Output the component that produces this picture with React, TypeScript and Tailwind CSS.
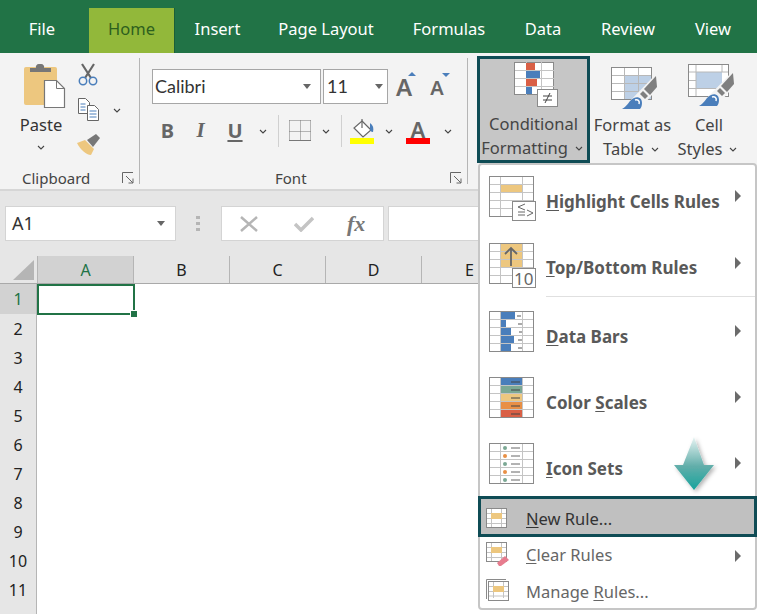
import type { ReactNode } from 'react'

const TABS = [
  { name: 'File', width: 'w-[84px]' },
  { name: 'Home', width: 'w-[91px] pl-[5px] pr-[0px]', active: true },
  { name: 'Insert', width: 'w-[85px]' },
  { name: 'Page Layout', width: 'w-[132px]' },
  { name: 'Formulas', width: 'w-[114px]' },
  { name: 'Data', width: 'w-[74px]' },
  { name: 'Review', width: 'w-[96px]' },
  { name: 'View', width: 'w-[74px]' },
]

const COLUMNS = ['B', 'C', 'D', 'E', 'F']
const ROWS = [2, 3, 4, 5, 6, 7, 8, 9, 10, 11]

function Chevron({ className = '' }: { className?: string }) {
  return (
    <svg viewBox="0 0 8 5" className={`h-[5px] w-[8px] shrink-0 ${className}`} fill="none" stroke="#444" strokeWidth="1.1">
      <path d="M1 1l3 3 3-3" />
    </svg>
  )
}

function Caret() {
  return (
    <svg viewBox="0 0 8 5" className="h-[5px] w-[8px] shrink-0" fill="#666">
      <path d="M0 0h8L4 5z" />
    </svg>
  )
}

function Launcher() {
  return (
    <svg viewBox="0 0 12 12" className="h-[12px] w-[12px]" fill="none" stroke="#666" strokeWidth="1">
      <path d="M.5 11V.5H11M4 4l7 7M11 6.500V11H6.500" />
    </svg>
  )
}

function Grid({ cols = [11, 33], rows = 5, w = 44, h = 40, line = '#c4c4c4', children, extra }: {
  cols?: number[]
  rows?: number
  w?: number
  h?: number
  line?: string
  children?: ReactNode
  extra?: ReactNode
}) {
  const step = h / rows
  return (
    <svg viewBox="0 0 48 46" className="h-[46px] w-[48px] shrink-0" fill="none">
      <rect x="0.500" y="0.500" width={w} height={h} fill="#fff" stroke="#8a8a8a" />
      {children}
      {Array.from({ length: rows - 1 }, (_, i) => (
        <path key={i} d={`M1 ${0.5 + step * (i + 1)}H${w}`} stroke={line} />
      ))}
      {cols.map((x) => (
        <path key={x} d={`M${x + 0.5} 1V${h}`} stroke={line} />
      ))}
      {extra}
    </svg>
  )
}

function PasteIcon() {
  return (
    <svg viewBox="0 0 42 46" className="h-[46px] w-[42px]">
      <rect x="0" y="4" width="33" height="38" rx="2" fill="#edc77f" />
      <path d="M6 9V5h6a3 3 0 0 1 3-4h2a3 3 0 0 1 3 4h7v4z" fill="#777" />
      <path d="M20.500 17.500h12l8 8v19h-20z" fill="#fff" stroke="#777" strokeWidth="1.200" />
      <path d="M32.500 17.500v8h8" fill="none" stroke="#777" />
    </svg>
  )
}

function CutIcon() {
  return (
    <svg viewBox="0 0 22 23" className="h-[23px] w-[22px]" fill="none">
      <path d="M5 1l9 14M17 1L8 15" stroke="#666" strokeWidth="2.200" />
      <circle cx="6" cy="18" r="3.700" stroke="#4a7ebb" strokeWidth="1.500" />
      <circle cx="16" cy="18" r="3.700" stroke="#4a7ebb" strokeWidth="1.500" />
    </svg>
  )
}

function CopyIcon() {
  return (
    <svg viewBox="0 0 21 23" className="h-[23px] w-[21px]" fill="#fff" stroke="#666" strokeWidth="1">
      <path d="M.500.500h7l4 4v11h-11z" />
      <path d="M9.500 7.500h7l4 4v11h-11z" />
      <path d="M2.500 6h5M2.500 9h5M2.500 12h5M11.500 13h7M11.500 16h7M11.500 19h7" stroke="#4a7ebb" />
    </svg>
  )
}

function BrushIcon() {
  return (
    <svg viewBox="0 0 24 21" className="h-[21px] w-[24px]">
      <path d="M0 9l8-3 9 9-3 6C9 21 3 15 0 9z" fill="#edc77f" />
      <path d="M10 6l9-6 4 4-7 9z" fill="#777" />
    </svg>
  )
}

function BordersIcon() {
  return (
    <svg viewBox="0 0 22 22" className="h-[22px] w-[22px]" fill="none" stroke="#777" strokeDasharray="1 1">
      <path d="M.500.500h21M.500 11.500h21M.500.500v20M11.500.500v20M21.500.500v20" />
      <path d="M0 20.500h22" strokeDasharray="none" />
    </svg>
  )
}

function FillIcon() {
  return (
    <svg viewBox="0 0 24 26" className="h-[26px] w-[24px]">
      <path d="M12 3l9 9-8 7-9-9z" fill="#fff" stroke="#666" strokeWidth="1.200" />
      <path d="M12 1v9" stroke="#666" strokeWidth="1.200" />
      <path d="M20 5c3 2 4 5 3 9-2 0-3-1-3-3z" fill="#4a7ebb" />
      <rect x="0" y="20" width="24" height="6" fill="#ffff00" />
    </svg>
  )
}

function BrushOverlay() {
  return (
    <>
      <path d="M45 7L17 36l11 7 19-22z" fill="#f3f3f3" />
      <path d="M45 9l1 11-7 8-6-6z" fill="#7f7f7f" />
      <path d="M32 24l5 5-3 3-5-5z" fill="#7f7f7f" />
      <path d="M11 42c6-3 7-9 12-11 4-2 8 0 8 5 0 3-1 5-2 6z" fill="#4a7ebb" />
      <path d="M24 33c3-1 5 1 4 4" stroke="#fff" strokeWidth="1.500" />
    </>
  )
}

function ConditionalIcon() {
  return (
    <svg viewBox="0 0 46 46" className="h-[46px] w-[46px]" fill="none">
      <rect x="0.500" y="0.500" width="39" height="32" fill="#fff" stroke="#8a8a8a" />
      <path d="M12.500 0v33M27.500 0v33M1 8.500h39M1 16.500h39M1 24.500h39" stroke="#c4c4c4" />
      <rect x="12" y="1" width="9" height="7" fill="#d95f45" />
      <rect x="12" y="9" width="14" height="7" fill="#4a7ebb" />
      <rect x="12" y="17" width="11" height="7" fill="#d95f45" />
      <rect x="12" y="25" width="6" height="7" fill="#4a7ebb" />
      <rect x="23.500" y="27.500" width="20" height="17" fill="#fff" stroke="#8a8a8a" />
      <path d="M29 34h9M29 38h9M36 31l-5 10" stroke="#444" />
    </svg>
  )
}

function TableIcon() {
  return (
    <svg viewBox="0 0 48 43" className="h-[43px] w-[48px]" fill="none">
      <rect x="0.500" y="0.500" width="40" height="32" fill="#fff" stroke="#8a8a8a" />
      <rect x="14" y="9" width="26" height="23" fill="#bdd0e6" />
      <path d="M1 8.500h39M1 16.500h39M1 24.500h39M13.500 1v31M27.500 1v31" stroke="#b8b8b8" />
      <BrushOverlay />
    </svg>
  )
}

function StylesIcon() {
  return (
    <svg viewBox="0 0 48 43" className="h-[43px] w-[48px]" fill="none">
      <rect x="0.500" y="0.500" width="40" height="32" fill="#fff" stroke="#8a8a8a" />
      <rect x="8" y="8" width="26" height="17" fill="#bdd0e6" />
      <path d="M1 8h7M1 16.500h7M1 24.500h33M8 1v31M34 1v7M8 8h32" stroke="#b8b8b8" />
      <BrushOverlay />
    </svg>
  )
}

function SplitLabel({ lines, chevron }: { lines: string[]; chevron?: boolean }) {
  return (
    <div className="flex flex-col items-center text-[16.500px] leading-[24px] text-[#444]">
      <span className="whitespace-nowrap">{lines[0]}</span>
      <span className="mr-[3px] flex items-center gap-[7px] whitespace-nowrap">
        {lines[1]}
        {chevron && <Chevron />}
      </span>
    </div>
  )
}

function MenuRow({ icon, label, offset = 'pt-[7px]', textOffset = 'pt-[3px]', arrow = 'mt-[-4px]', height = 'h-[66px]' }: {
  icon: ReactNode
  label: ReactNode
  offset?: string
  textOffset?: string
  arrow?: string
  height?: string
}) {
  return (
    <div className={`flex shrink-0 items-center pl-[9px] pr-[14px] ${height}`}>
      <div className={`w-[57px] shrink-0 ${offset}`}>{icon}</div>
      <div className={`flex-1 whitespace-nowrap text-[17px] font-bold text-[#595959] ${textOffset}`}>{label}</div>
      <svg viewBox="0 0 6 12" className={`h-[12px] w-[6px] ${arrow}`} fill="#6b6b6b">
        <path d="M0 0l6 6-6 6z" />
      </svg>
    </div>
  )
}

function SmallRuleIcon({ children, stacked }: { children?: ReactNode; stacked?: boolean }) {
  return (
    <svg viewBox="0 0 24 24" className="h-[24px] w-[24px]" fill="none">
      {stacked && <path d="M.500 20V.500H20" stroke="#8a8a8a" />}
      <rect x={stacked ? 2.500 : 0.500} y={stacked ? 2.500 : 0.500} width="20" height="19" fill="#fff" stroke="#8a8a8a" />
      <path d={stacked ? 'M3 7.500h19M3 12.500h19M3 17h19M7.500 3v16M17.500 3v16' : 'M1 5.500h19M1 10.500h19M1 15.500h19M5.500 1v18M15.500 1v18'} stroke="#c4c4c4" />
      <rect x={stacked ? 7 : 5} y={stacked ? 7 : 5} width="11" height="6" fill="#edc77f" />
      {children}
    </svg>
  )
}

export default function App() {
  return (
    <div className="relative flex h-[614px] w-[757px] flex-col overflow-hidden bg-white font-['Noto_Sans',sans-serif]">
      {/* tabs */}
      <div className="flex h-[53px] shrink-0 items-end bg-[#217346]">
        {TABS.map((tab) => (
          <div key={tab.name} className={`flex h-[45px] shrink-0 items-stretch text-[16.500px] ${tab.width}`}>
            <div
              className={`flex flex-1 items-center justify-center pb-[2px] ${
                tab.active ? 'border-r border-[#1b5e38] bg-[#92b83a] text-[#2d5f1e]' : 'text-white'
              }`}
            >
              {tab.name}
            </div>
          </div>
        ))}
      </div>

      {/* ribbon */}
      <div className="flex h-[138px] shrink-0 border-b-2 border-[#d6d6d6] bg-[#f3f3f3]">
        <div className="my-[5px] flex w-[140px] shrink-0 flex-col border-r border-[#b5b5b5]">
          <div className="flex flex-1 pl-[24px] pt-[5px]">
            <div className="flex w-[42px] flex-col items-center">
              <PasteIcon />
              <span className="mr-[8px] mt-[4px] text-[16.500px] leading-[24px] text-[#333]">Paste</span>
              <Chevron className="mr-[8px] mt-[8px]" />
            </div>
            <div className="ml-[11px] flex flex-col">
              <CutIcon />
              <div className="ml-[1px] mt-[12px] flex items-center gap-[14px]">
                <CopyIcon />
                <Chevron className="mt-[2px]" />
              </div>
              <div className="mt-[13px]"><BrushIcon /></div>
            </div>
          </div>
          <div className="flex h-[24px] items-center pl-[22px] pr-[5px] pt-[12px] text-[15px] text-[#444]">
            <span className="flex-1">Clipboard</span>
            <Launcher />
          </div>
        </div>

        <div className="my-[5px] flex w-[328px] shrink-0 flex-col border-r border-[#b5b5b5]">
          <div className="flex-1 pl-[12px] pt-[11px]">
            <div className="flex items-center">
              <div className="flex h-[35px] w-[169px] items-center justify-between border border-[#a6a6a6] bg-white pl-[2px] pr-[9px] font-['Lato',sans-serif] text-[18px] text-[#333]">
                Calibri
                <Caret />
              </div>
              <div className="ml-[2px] flex h-[35px] w-[65px] items-center justify-between border border-[#a6a6a6] bg-white pl-[3px] pr-[4px] font-['Lato',sans-serif] text-[18px] text-[#333]">
                11
                <Caret />
              </div>
              <span className="relative ml-[1px] w-[30px] text-center text-[24px] font-semibold leading-none text-[#666]">
                A
                <svg viewBox="0 0 8 4" className="absolute right-[3px] top-[-3px] h-[4px] w-[8px]" fill="#4a7ebb"><path d="M4 0l4 4H0z" /></svg>
              </span>
              <span className="relative ml-[3px] mt-[2px] w-[30px] text-center text-[20px] font-semibold leading-none text-[#666]">
                A
                <svg viewBox="0 0 8 4" className="absolute right-[2px] top-[-5px] h-[4px] w-[8px]" fill="#4a7ebb"><path d="M0 0h8L4 4z" /></svg>
              </span>
            </div>
            <div className="mt-[10px] flex h-[34px] items-center text-[#666]">
              <span className="w-[31px] text-center text-[20px] font-bold">B</span>
              <span className="ml-[2px] w-[31px] text-center font-['Liberation_Serif',serif] text-[21px] font-bold italic">I</span>
              <span className="ml-[3px] w-[32px] text-center text-[20px] font-bold underline decoration-2 underline-offset-2">U</span>
              <Chevron className="ml-[8px]" />
              <span className="ml-[11px] h-[32px] w-px bg-[#d0d0d0]" />
              <span className="ml-[10px]"><BordersIcon /></span>
              <Chevron className="ml-[11px]" />
              <span className="ml-[11px] h-[32px] w-px bg-[#d0d0d0]" />
              <span className="ml-[8px]"><FillIcon /></span>
              <Chevron className="ml-[11px]" />
              <span className="relative ml-[13px] flex h-[26px] w-[24px] flex-col items-center">
                <span className="text-[22px] font-semibold leading-[22px] text-[#666]">A</span>
                <span className="absolute bottom-0 h-[6px] w-[24px] bg-[#ff0000]" />
              </span>
              <Chevron className="ml-[14px]" />
            </div>
          </div>
          <div className="flex h-[24px] items-center pr-[5px] pt-[12px] text-[15px] text-[#444]">
            <span className="ml-[135px] flex-1">Font</span>
            <Launcher />
          </div>
        </div>

        <div className="ml-[9px] flex items-start pt-[3px]">
          <div className="flex h-[107px] w-[113px] flex-col items-center border-[3px] border-[#0f4c55] bg-[#c6c6c6] pt-[3px]">
            <div className="mr-[-6px] h-[50px]"><ConditionalIcon /></div>
            <SplitLabel lines={['Conditional', 'Formatting']} chevron />
          </div>
          <div className="flex w-[85px] flex-col items-center pt-[11px]">
            <div className="h-[46px] pl-[5px]"><TableIcon /></div>
            <SplitLabel lines={['Format as', 'Table']} chevron />
          </div>
          <div className="flex w-[68px] flex-col items-center pt-[8px]">
            <div className="h-[49px] pl-[6px]"><StylesIcon /></div>
            <SplitLabel lines={['Cell', 'Styles']} chevron />
          </div>
        </div>
      </div>

      {/* formula bar */}
      <div className="flex h-[65px] shrink-0 items-start bg-[#e6e6e6] pl-[5px] pt-[15px]">
        <div className="flex h-[35px] w-[171px] items-center justify-between border border-[#d4d4d4] bg-white pl-[6px] pr-[10px] text-[18px] text-[#333]">
          A1
          <Caret />
        </div>
        <div className="ml-[20px] flex h-[35px] w-[4px] flex-col justify-center gap-[3px]">
          <span className="h-[3px] w-[4px] bg-[#b5b5b5]" />
          <span className="h-[3px] w-[4px] bg-[#b5b5b5]" />
          <span className="h-[3px] w-[4px] bg-[#b5b5b5]" />
        </div>
        <div className="ml-[21px] flex h-[35px] w-[163px] items-center border border-[#d4d4d4] bg-white pl-[18px]">
          <svg viewBox="0 0 18 16" className="h-[16px] w-[18px]" fill="none" stroke="#b5b5b5" strokeWidth="2.500"><path d="M1 1l16 14M17 1L1 15" /></svg>
          <svg viewBox="0 0 20 16" className="ml-[36px] h-[16px] w-[20px]" fill="none" stroke="#c4c4c4" strokeWidth="3.500"><path d="M1 8l6 6L19 2" /></svg>
          <span className="ml-[33px] font-['Liberation_Serif',serif] text-[22px] font-bold italic text-[#777]">fx</span>
        </div>
        <div className="ml-[4px] h-[35px] flex-1 border border-[#d4d4d4] bg-white" />
      </div>

      {/* sheet */}
      <div className="flex h-[28px] shrink-0 border-b border-[#a9a9a9] bg-[#e6e6e6] text-[16px] text-[#222]">
        <div className="flex w-[37px] shrink-0 items-end justify-end pb-[3px] pr-[3px]">
          <svg viewBox="0 0 21 20" className="h-[20px] w-[21px]" fill="#b5b5b5"><path d="M21 0v20H0z" /></svg>
        </div>
        <div className="flex w-[97px] shrink-0 items-center justify-center border-x border-[#b5b5b5] bg-[#d2d2d2] text-[#217346]">A</div>
        {COLUMNS.map((col) => (
          <div key={col} className="flex w-[96px] shrink-0 items-center justify-center border-r border-[#b5b5b5]">{col}</div>
        ))}
      </div>
      <div className="flex min-h-0 flex-1 flex-col text-[16px] text-[#222]">
        <div className="flex h-[30px] shrink-0">
          <div className="flex w-[37px] shrink-0 items-center justify-center border-r border-[#b5b5b5] bg-[#d2d2d2] text-[#217346]">1</div>
          <div className="relative h-[31px] w-[98px] shrink-0 border-2 border-[#217346] bg-white">
            <span className="absolute bottom-[-5px] right-[-5px] h-[8px] w-[8px] border border-white bg-[#217346]" />
          </div>
        </div>
        {ROWS.map((row) => (
          <div key={row} className="flex h-[29px] w-[37px] shrink-0 items-center justify-center border-r border-[#b5b5b5] bg-[#e6e6e6]">{row}</div>
        ))}
        <div className="w-[37px] flex-1 border-r border-[#b5b5b5] bg-[#e6e6e6]" />
      </div>

      {/* dropdown menu */}
      <div className="absolute left-[478px] top-[163px] flex h-[447px] w-[279px] flex-col rounded-[4px] border-2 border-[#c6c6c6] bg-white">
        <MenuRow
          offset="pt-[2px]"
          textOffset="pt-[7px]"
          arrow="mt-[-4px]"
          icon={
            <Grid extra={
              <>
                <rect x="23.500" y="25.500" width="23" height="19" fill="#fff" stroke="#8a8a8a" />
                <path d="M36 28l-7 3 7 3M29 36h7M29 39h7M38 34l6 3-6 3" stroke="#666" />
              </>
            }>
              <rect x="11" y="8" width="23" height="8" fill="#edc77f" />
            </Grid>
          }
          label={<><span className="underline underline-offset-2">H</span>ighlight Cells Rules</>}
        />
        <MenuRow
          height="h-[65px]"
          offset="pt-[4px]"
          textOffset="pt-[9px]"
          arrow="mt-[-1px]"
          icon={
            <Grid extra={
              <>
                <path d="M22 23V5M16 11l6-6 6 6" stroke="#666" strokeWidth="1.800" />
                <rect x="23.500" y="25.500" width="23" height="19" fill="#fff" stroke="#8a8a8a" />
                <text x="25" y="42" fontSize="17" fill="#666">10</text>
              </>
            }>
              <rect x="11" y="1" width="23" height="23" fill="#edc77f" />
            </Grid>
          }
          label={<><span className="underline underline-offset-2">T</span>op/Bottom Rules</>}
        />
        <div className="ml-[66px] h-px shrink-0 bg-[#e0e0e0]" />
        <MenuRow
          height="h-[67px]"
          offset="pt-[6px]"
          textOffset="pt-[12px]"
          arrow="mt-[1px]"
          icon={
            <Grid extra={
              <path d="M28 5h4M29 13h4M30 21h3M29 29h4M29 37h4" stroke="#555" />
            }>
              <rect x="11" y="1" width="15" height="7" fill="#4a7ebb" />
              <rect x="11" y="9" width="6" height="7" fill="#4a7ebb" />
              <rect x="11" y="17" width="11" height="7" fill="#4a7ebb" />
              <rect x="11" y="25" width="14" height="7" fill="#4a7ebb" />
              <rect x="11" y="33" width="11" height="7" fill="#4a7ebb" />
            </Grid>
          }
          label={<><span className="underline underline-offset-2">D</span>ata Bars</>}
        />
        <MenuRow
          offset="pt-[6px]"
          textOffset="pt-[11px]"
          arrow="mt-[0px]"
          icon={
            <Grid extra={
              <path d="M22 5h9M22 13h9M22 21h9M22 29h9M22 37h9" stroke="#444" />
            }>
              <rect x="11" y="1" width="23" height="7" fill="#4a7ebb" />
              <rect x="11" y="9" width="23" height="7" fill="#7ba894" />
              <rect x="11" y="17" width="23" height="7" fill="#edc77f" />
              <rect x="11" y="25" width="23" height="7" fill="#e88f45" />
              <rect x="11" y="33" width="23" height="7" fill="#d95f45" />
            </Grid>
          }
          label={<>Color <span className="underline underline-offset-2">S</span>cales</>}
        />
        <MenuRow
          offset="pt-[6px]"
          textOffset="pt-[11px]"
          arrow="mt-[0px]"
          icon={
            <Grid extra={
              <>
                <path d="M22 5h9M22 13h9M22 21h9M22 29h9M22 37h9" stroke="#666" />
                <circle cx="16" cy="5" r="2" fill="#7ba894" />
                <circle cx="16" cy="13" r="2" fill="#e88f45" />
                <circle cx="16" cy="21" r="2" fill="#7ba894" />
                <circle cx="16" cy="29" r="2" fill="#e88f45" />
                <circle cx="16" cy="37" r="2" fill="#7ba894" />
              </>
            } />
          }
          label={<><span className="underline underline-offset-2">I</span>con Sets</>}
        />
        <div className="-mx-[2px] flex h-[41px] shrink-0 items-center border-[3px] border-[#0f4c55] bg-[#c0c0c0] pl-[5px] text-[16.500px] text-[#333]">
          <div className="mt-[6px] w-[40px] shrink-0"><SmallRuleIcon /></div>
          <span className="pt-[6px]"><span className="underline underline-offset-2">N</span>ew Rule...</span>
        </div>
        <div className="flex h-[37px] shrink-0 items-center pl-[6px] pr-[14px] text-[16.500px] text-[#666]">
          <div className="mb-[4px] w-[40px] shrink-0">
            <SmallRuleIcon>
              <path d="M11 21l8-7 4 4-8 6h-2z" fill="#e77c8e" />
            </SmallRuleIcon>
          </div>
          <span className="flex-1"><span className="underline underline-offset-2">C</span>lear Rules</span>
          <svg viewBox="0 0 6 12" className="h-[12px] w-[6px]" fill="#6b6b6b"><path d="M0 0l6 6-6 6z" /></svg>
        </div>
        <div className="flex h-[35px] shrink-0 items-center pl-[6px] text-[16.500px] text-[#666]">
          <div className="mb-[2px] w-[40px] shrink-0"><SmallRuleIcon stacked /></div>
          <span className="pt-[2px]">Manage <span className="underline underline-offset-2">R</span>ules...</span>
        </div>
      </div>

      {/* callout arrow */}
      <svg viewBox="0 0 52 64" className="absolute left-[668px] top-[434px] h-[64px] w-[52px]">
        <defs>
          <linearGradient id="arrowFill" x1="0" y1="0" x2="0" y2="1">
            <stop offset="0" stopColor="#e8f4f3" />
            <stop offset="0.550" stopColor="#62aeaa" />
            <stop offset="1" stopColor="#15a39c" />
          </linearGradient>
          <filter id="arrowShadow" x="-30%" y="-30%" width="160%" height="160%">
            <feDropShadow dx="2" dy="2" stdDeviation="2" floodColor="#000" floodOpacity="0.300" />
          </filter>
        </defs>
        <path d="M26 3l10 28h10L26 56 6 31h9z" fill="url(#arrowFill)" filter="url(#arrowShadow)" />
      </svg>
    </div>
  )
}
